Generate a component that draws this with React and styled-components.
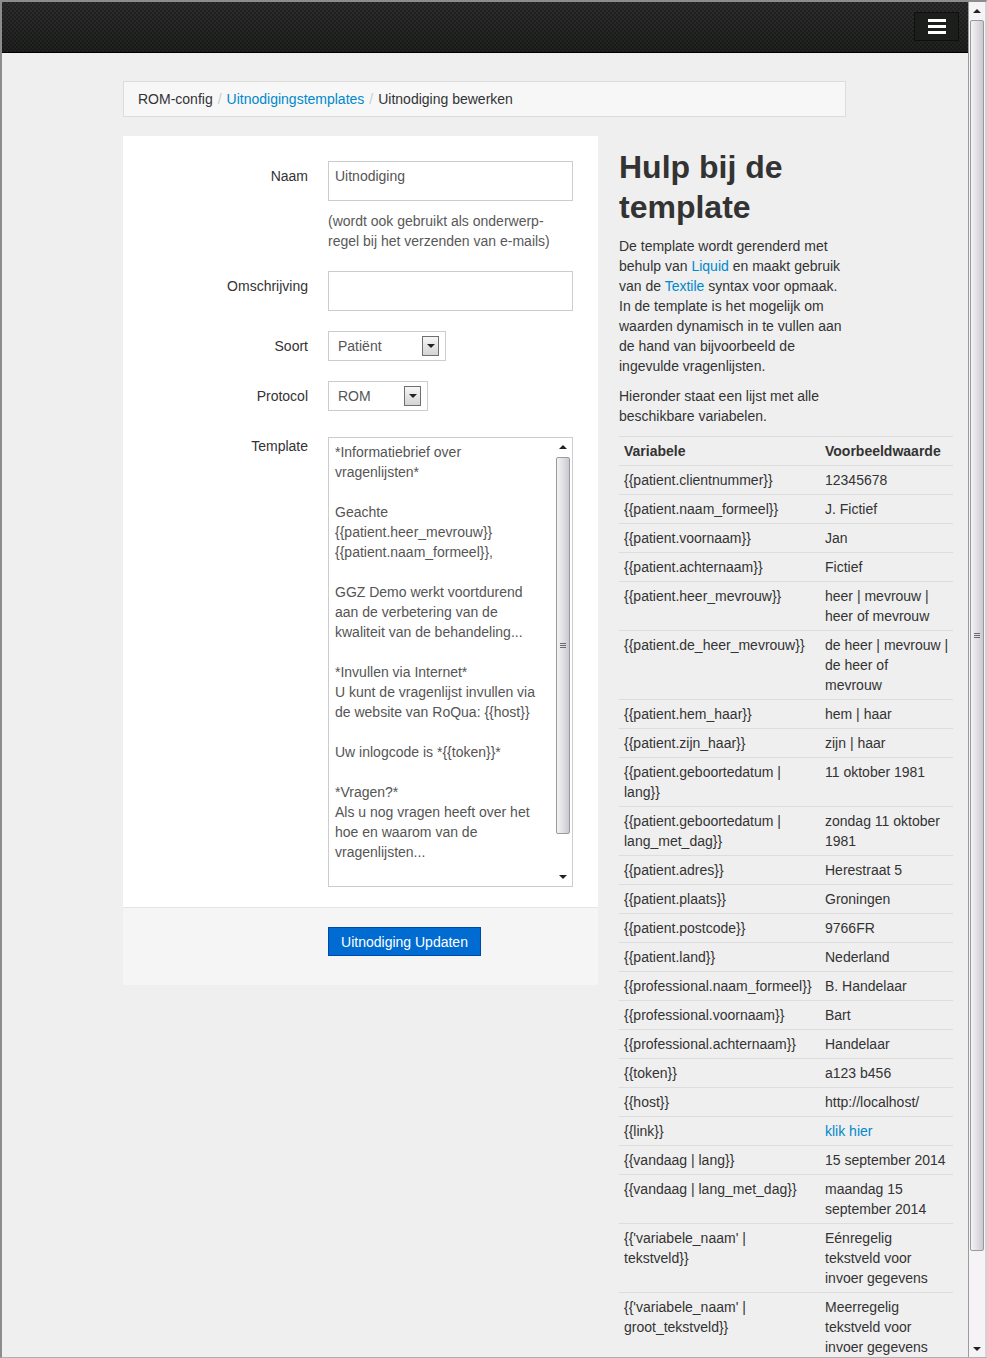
import React from "react";
import styled, { createGlobalStyle } from "styled-components";

const GlobalStyle = createGlobalStyle`
  html, body {
    margin: 0;
    padding: 0;
  }
  body {
    font-family: "Liberation Sans", Arial, sans-serif;
    font-size: 14px;
    line-height: 20px;
    color: #333;
  }
  * {
    box-sizing: border-box;
  }
`;

const Frame = styled.div`
  width: 987px;
  height: 1358px;
  display: flex;
  overflow: hidden;
  border-top: 2px solid #8c8c8c;
  border-left: 2px solid #8c8c8c;
  border-right: 1px solid #d0d0d0;
  border-bottom: 1px solid #b0b0b0;
`;

const Viewport = styled.div`
  flex: 1;
  background: #efefef;
  overflow: hidden;
`;

/* browser scrollbar on the right of the window */
const WindowScroll = styled.div`
  width: 18px;
  flex: none;
  display: flex;
  flex-direction: column;
  align-items: center;
  background: #f5f3f6;
  border-left: 1px solid #9c9c9c;
  border-right: 1px solid #d6d6d6;
`;

const ArrowCell = styled.div`
  height: ${(p) => p.$h || 17}px;
  width: 100%;
  flex: none;
  display: flex;
  align-items: center;
  justify-content: center;
`;

const Triangle = styled.span`
  width: 0;
  height: 0;
  border-left: 4px solid transparent;
  border-right: 4px solid transparent;
  ${(p) =>
    p.$down
      ? "border-top: 4px solid #222;"
      : "border-bottom: 4px solid #222;"}
`;

const Thumb = styled.div`
  width: ${(p) => p.$w || 14}px;
  height: ${(p) => p.$h}px;
  margin-top: ${(p) => p.$top || 0}px;
  flex: none;
  border: 1px solid #9a9a9a;
  border-radius: 2px;
  background: linear-gradient(to right, #f3f3f5 0%, #e2e2e6 45%, #c8c8d0 100%);
  display: flex;
  flex-direction: column;
  align-items: center;
  justify-content: center;
  gap: 1px;
`;

const Grip = styled.span`
  width: 6px;
  height: 1px;
  background: #6a6a6a;
`;

const Track = styled.div`
  flex: 1;
`;

const Navbar = styled.header`
  height: 51px;
  border-bottom: 1px solid #000;
  background-color: #252525;
  background-image: linear-gradient(
      45deg,
      rgba(0, 0, 0, 0.25) 25%,
      transparent 25%,
      transparent 75%,
      rgba(0, 0, 0, 0.25) 75%
    ),
    linear-gradient(
      45deg,
      rgba(0, 0, 0, 0.25) 25%,
      transparent 25%,
      transparent 75%,
      rgba(0, 0, 0, 0.25) 75%
    ),
    linear-gradient(#2d2d2d, #1f211f);
  background-size: 4px 4px, 4px 4px, 100% 100%;
  background-position: 0 0, 2px 2px, 0 0;
  display: flex;
  justify-content: flex-end;
  align-items: flex-start;
  padding: 10px 9px 0 0;
`;

const MenuToggle = styled.button`
  width: 45px;
  height: 29px;
  padding: 0;
  background: #1b1e1b;
  border: 1px solid #0e100e;
  display: flex;
  flex-direction: column;
  align-items: center;
  justify-content: center;
  gap: 3px;
  cursor: pointer;
`;

const IconBar = styled.span`
  width: 18px;
  height: 3px;
  background: #fff;
`;

const Main = styled.main`
  padding: 28px 0 0 121px;
`;

const Breadcrumb = styled.ul`
  width: 723px;
  margin: 0 0 19px;
  padding: 7px 14px;
  list-style: none;
  background: #f7f7f8;
  border: 1px solid #dcdcdc;
  display: flex;
`;

const Crumb = styled.li`
  color: #333;
`;

const Divider = styled.span`
  color: #ccc;
  padding: 0 5px;
`;

const Link = styled.a`
  color: #0088cc;
  text-decoration: none;
`;

const Columns = styled.div`
  display: flex;
  align-items: flex-start;
  gap: 21px;
`;

const FormPanel = styled.form`
  width: 475px;
  background: #fff;
`;

const FormBody = styled.div`
  padding: 25px 0 20px 25px;
  display: flex;
  flex-direction: column;
  gap: 20px;
`;

const Group = styled.div`
  display: flex;
  align-items: flex-start;
`;

const Label = styled.label`
  width: 160px;
  margin-right: 20px;
  padding-top: 5px;
  text-align: right;
  color: #333;
`;

const Controls = styled.div`
  display: flex;
  flex-direction: column;
`;

const TextInput = styled.div`
  width: 245px;
  height: 40px;
  padding: 4px 6px;
  border: 1px solid #ccc;
  background: #fff;
  color: #555;
`;

const Help = styled.p`
  margin: 10px 0 0;
  color: #595959;
`;

const Select = styled.div`
  width: ${(p) => p.$w}px;
  height: 30px;
  border: 1px solid #ccc;
  background: #fff;
  padding: 0 6px 0 9px;
  display: flex;
  align-items: center;
  justify-content: space-between;
  color: #555;
`;

const SelectButton = styled.span`
  width: 17px;
  height: 20px;
  border: 1px solid #6f6f6f;
  background: linear-gradient(#f6f6f6, #d4d4d4);
  display: flex;
  align-items: center;
  justify-content: center;
`;

const TextArea = styled.div`
  width: 245px;
  height: 450px;
  margin-top: 6px;
  border: 1px solid #ccc;
  background: #fff;
  display: flex;
`;

const AreaText = styled.div`
  flex: 1;
  padding: 4px 0 0 6px;
  white-space: pre;
  color: #555;
`;

const AreaScroll = styled.div`
  width: 16px;
  margin: 1px 1px 1px 0;
  display: flex;
  flex-direction: column;
  align-items: center;
`;

const FormActions = styled.div`
  background: #f5f5f5;
  border-top: 1px solid #e5e5e5;
  padding: 19px 0 29px 205px;
`;

const PrimaryButton = styled.button`
  height: 29px;
  width: 153px;
  padding: 0;
  font-family: inherit;
  font-size: 14px;
  line-height: 20px;
  color: #fff;
  background: #006bd0;
  border: 1px solid #0047ad;
  cursor: pointer;
`;

const HelpColumn = styled.aside`
  width: 334px;
`;

const Title = styled.h1`
  margin: 11px 0 9px;
  max-width: 232px;
  font-size: 32px;
  line-height: 40px;
  font-weight: bold;
  color: #333;
`;

const Paragraph = styled.p`
  margin: 0 0 10px;
  max-width: 232px;
`;

const VarTable = styled.table`
  width: 334px;
  border-collapse: collapse;
  table-layout: fixed;
  margin-bottom: 20px;

  th,
  td {
    padding: 4px 5px;
    text-align: left;
    vertical-align: top;
    border-top: 1px solid #ddd;
    line-height: 20px;
    white-space: nowrap;
  }

  th {
    font-weight: bold;
  }
`;

const templateText = `*Informatiebrief over
vragenlijsten*

Geachte
{{patient.heer_mevrouw}}
{{patient.naam_formeel}},

GGZ Demo werkt voortdurend
aan de verbetering van de
kwaliteit van de behandeling...

*Invullen via Internet*
U kunt de vragenlijst invullen via
de website van RoQua: {{host}}

Uw inlogcode is *{{token}}*

*Vragen?*
Als u nog vragen heeft over het
hoe en waarom van de
vragenlijsten...`;

// each cell is a list of the lines it shows
const variables = [
  [["{{patient.clientnummer}}"], ["12345678"]],
  [["{{patient.naam_formeel}}"], ["J. Fictief"]],
  [["{{patient.voornaam}}"], ["Jan"]],
  [["{{patient.achternaam}}"], ["Fictief"]],
  [["{{patient.heer_mevrouw}}"], ["heer | mevrouw |", "heer of mevrouw"]],
  [["{{patient.de_heer_mevrouw}}"], ["de heer | mevrouw |", "de heer of", "mevrouw"]],
  [["{{patient.hem_haar}}"], ["hem | haar"]],
  [["{{patient.zijn_haar}}"], ["zijn | haar"]],
  [["{{patient.geboortedatum |", "lang}}"], ["11 oktober 1981"]],
  [["{{patient.geboortedatum |", "lang_met_dag}}"], ["zondag 11 oktober", "1981"]],
  [["{{patient.adres}}"], ["Herestraat 5"]],
  [["{{patient.plaats}}"], ["Groningen"]],
  [["{{patient.postcode}}"], ["9766FR"]],
  [["{{patient.land}}"], ["Nederland"]],
  [["{{professional.naam_formeel}}"], ["B. Handelaar"]],
  [["{{professional.voornaam}}"], ["Bart"]],
  [["{{professional.achternaam}}"], ["Handelaar"]],
  [["{{token}}"], ["a123 b456"]],
  [["{{host}}"], ["http://localhost/"]],
  [["{{link}}"], ["klik hier"], true],
  [["{{vandaag | lang}}"], ["15 september 2014"]],
  [["{{vandaag | lang_met_dag}}"], ["maandag 15", "september 2014"]],
  [["{{'variabele_naam' |", "tekstveld}}"], ["Eénregelig", "tekstveld voor", "invoer gegevens"]],
  [["{{'variabele_naam' |", "groot_tekstveld}}"], ["Meerregelig", "tekstveld voor", "invoer gegevens"]],
];

const Lines = ({ lines }) =>
  lines.map((line, i) => (
    <React.Fragment key={i}>
      {i > 0 && <br />}
      {line}
    </React.Fragment>
  ));

const FakeSelect = ({ width, value }) => (
  <Select $w={width}>
    <span>{value}</span>
    <SelectButton>
      <Triangle $down />
    </SelectButton>
  </Select>
);

const ThumbGrip = () => (
  <>
    <Grip />
    <Grip />
    <Grip />
  </>
);

export default function App() {
  return (
    <>
      <GlobalStyle />
      <Frame>
        <Viewport>
          <Navbar>
            <MenuToggle type="button" aria-label="Menu">
              <IconBar />
              <IconBar />
              <IconBar />
            </MenuToggle>
          </Navbar>
          <Main>
            <Breadcrumb>
              <Crumb>ROM-config</Crumb>
              <Divider>/</Divider>
              <Crumb>
                <Link href="#">Uitnodigingstemplates</Link>
              </Crumb>
              <Divider>/</Divider>
              <Crumb>Uitnodiging bewerken</Crumb>
            </Breadcrumb>
            <Columns>
              <FormPanel onSubmit={(e) => e.preventDefault()}>
                <FormBody>
                  <Group>
                    <Label>Naam</Label>
                    <Controls>
                      <TextInput>Uitnodiging</TextInput>
                      <Help>
                        (wordt ook gebruikt als onderwerp-
                        <br />
                        regel bij het verzenden van e-mails)
                      </Help>
                    </Controls>
                  </Group>
                  <Group>
                    <Label>Omschrijving</Label>
                    <Controls>
                      <TextInput />
                    </Controls>
                  </Group>
                  <Group>
                    <Label>Soort</Label>
                    <Controls>
                      <FakeSelect width={118} value="Patiënt" />
                    </Controls>
                  </Group>
                  <Group>
                    <Label>Protocol</Label>
                    <Controls>
                      <FakeSelect width={100} value="ROM" />
                    </Controls>
                  </Group>
                  <Group>
                    <Label>Template</Label>
                    <Controls>
                      <TextArea>
                        <AreaText>{templateText}</AreaText>
                        <AreaScroll>
                          <ArrowCell $h={16}>
                            <Triangle />
                          </ArrowCell>
                          <Thumb $h={377} $top={2}>
                            <ThumbGrip />
                          </Thumb>
                          <Track />
                          <ArrowCell $h={16}>
                            <Triangle $down />
                          </ArrowCell>
                        </AreaScroll>
                      </TextArea>
                    </Controls>
                  </Group>
                </FormBody>
                <FormActions>
                  <PrimaryButton type="submit">Uitnodiging Updaten</PrimaryButton>
                </FormActions>
              </FormPanel>
              <HelpColumn>
                <Title>Hulp bij de template</Title>
                <Paragraph>
                  De template wordt gerenderd met behulp van{" "}
                  <Link href="#">Liquid</Link> en maakt gebruik van de{" "}
                  <Link href="#">Textile</Link> syntax voor opmaak. In de
                  template is het mogelijk om waarden dynamisch in te vullen
                  aan de hand van bijvoorbeeld de ingevulde vragenlijsten.
                </Paragraph>
                <Paragraph>
                  Hieronder staat een lijst met alle beschikbare variabelen.
                </Paragraph>
                <VarTable>
                  <colgroup>
                    <col style={{ width: 201 }} />
                    <col style={{ width: 133 }} />
                  </colgroup>
                  <thead>
                    <tr>
                      <th>Variabele</th>
                      <th>Voorbeeldwaarde</th>
                    </tr>
                  </thead>
                  <tbody>
                    {variables.map(([name, example, isLink]) => (
                      <tr key={name.join(" ")}>
                        <td>
                          <Lines lines={name} />
                        </td>
                        <td>
                          {isLink ? (
                            <Link href="#">
                              <Lines lines={example} />
                            </Link>
                          ) : (
                            <Lines lines={example} />
                          )}
                        </td>
                      </tr>
                    ))}
                  </tbody>
                </VarTable>
              </HelpColumn>
            </Columns>
          </Main>
        </Viewport>
        <WindowScroll>
          <ArrowCell $h={17}>
            <Triangle />
          </ArrowCell>
          <Thumb $h={1231} $top={1}>
            <ThumbGrip />
          </Thumb>
          <Track />
          <ArrowCell $h={17}>
            <Triangle $down />
          </ArrowCell>
        </WindowScroll>
      </Frame>
    </>
  );
}
